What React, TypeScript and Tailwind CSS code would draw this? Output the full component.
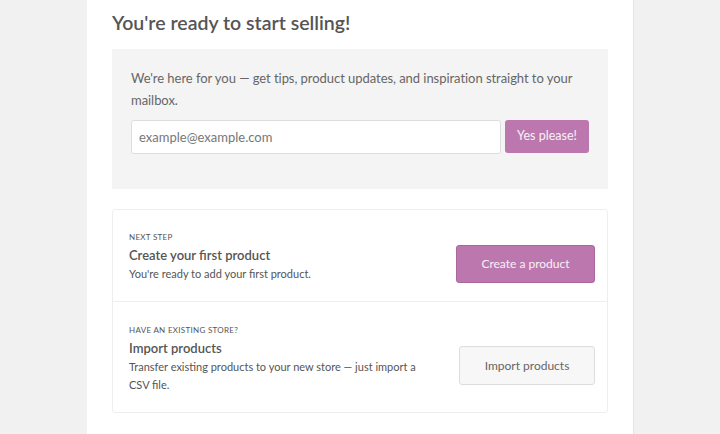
import React from "react";

export default function App() {
  return (
    <div
      className="w-[720px] h-[434px] overflow-hidden bg-[#f1f1f1] flex"
      style={{ fontFamily: 'Lato, "Noto Sans", sans-serif' }}
    >
      <div className="ml-[87px] w-[547px] bg-white border-r border-[#e5e5e5] px-[25px] pt-[10px] text-[#555]">
        <h1 className="text-[19.5px] leading-[26px] font-semibold text-[#555] mb-[13px]">
          You're ready to start selling!
        </h1>
        <div className="bg-[#f4f4f4] px-[19px] pt-[18px] pb-[35px]">
          <p className="text-[13px] leading-[22px] text-[#666] tracking-[-0.05px]">
            We're here for you — get tips, product updates, and inspiration straight to your mailbox.
          </p>
          <div className="flex gap-[4px] mt-[9px]">
            <input
              className="flex-1 h-[34px] bg-white border border-[#ddd] rounded-[3px] px-[7px] text-[13px] text-[#666] placeholder:text-[#777] outline-none"
              placeholder="example@example.com"
            />
            <button className="w-[84px] h-[33px] bg-[#bb77ae] text-white/90 rounded-[3px] text-[12.5px]">
              Yes please!
            </button>
          </div>
        </div>
        <div className="mt-[20px] border border-[#eee] rounded-[3px]">
          <div className="flex items-center justify-between pl-[16px] pr-[12px] h-[92px] border-b border-[#eee]">
            <div className="pt-[3px]">
              <div className="text-[8px] leading-[12px] uppercase tracking-[0.3px] text-[#555] mb-[2px]">Next step</div>
              <div className="text-[13px] leading-[20px] font-semibold text-[#555]">Create your first product</div>
              <div className="text-[11px] leading-[18px] text-[#555]">You're ready to add your first product.</div>
            </div>
            <button className="mt-[17px] w-[139px] h-[38px] bg-[#bb77ae] border border-[#a9679c] rounded-[3px] text-white/90 text-[12px]">
              Create a product
            </button>
          </div>
          <div className="flex items-center justify-between pl-[16px] pr-[12px] h-[110px]">
            <div className="w-[300px] pt-[4px]">
              <div className="text-[8px] leading-[12px] uppercase tracking-[0.3px] text-[#555] mb-[2px]">Have an existing store?</div>
              <div className="text-[13px] leading-[20px] font-semibold text-[#555]">Import products</div>
              <div className="text-[11px] leading-[18px] text-[#555]">
                Transfer existing products to your new store — just import a CSV file.
              </div>
            </div>
            <button className="mt-[17px] w-[136px] h-[39px] bg-[#f7f7f7] border border-[#ddd] rounded-[3px] text-[#666] text-[12px]">
              Import products
            </button>
          </div>
        </div>
      </div>
    </div>
  );
}
